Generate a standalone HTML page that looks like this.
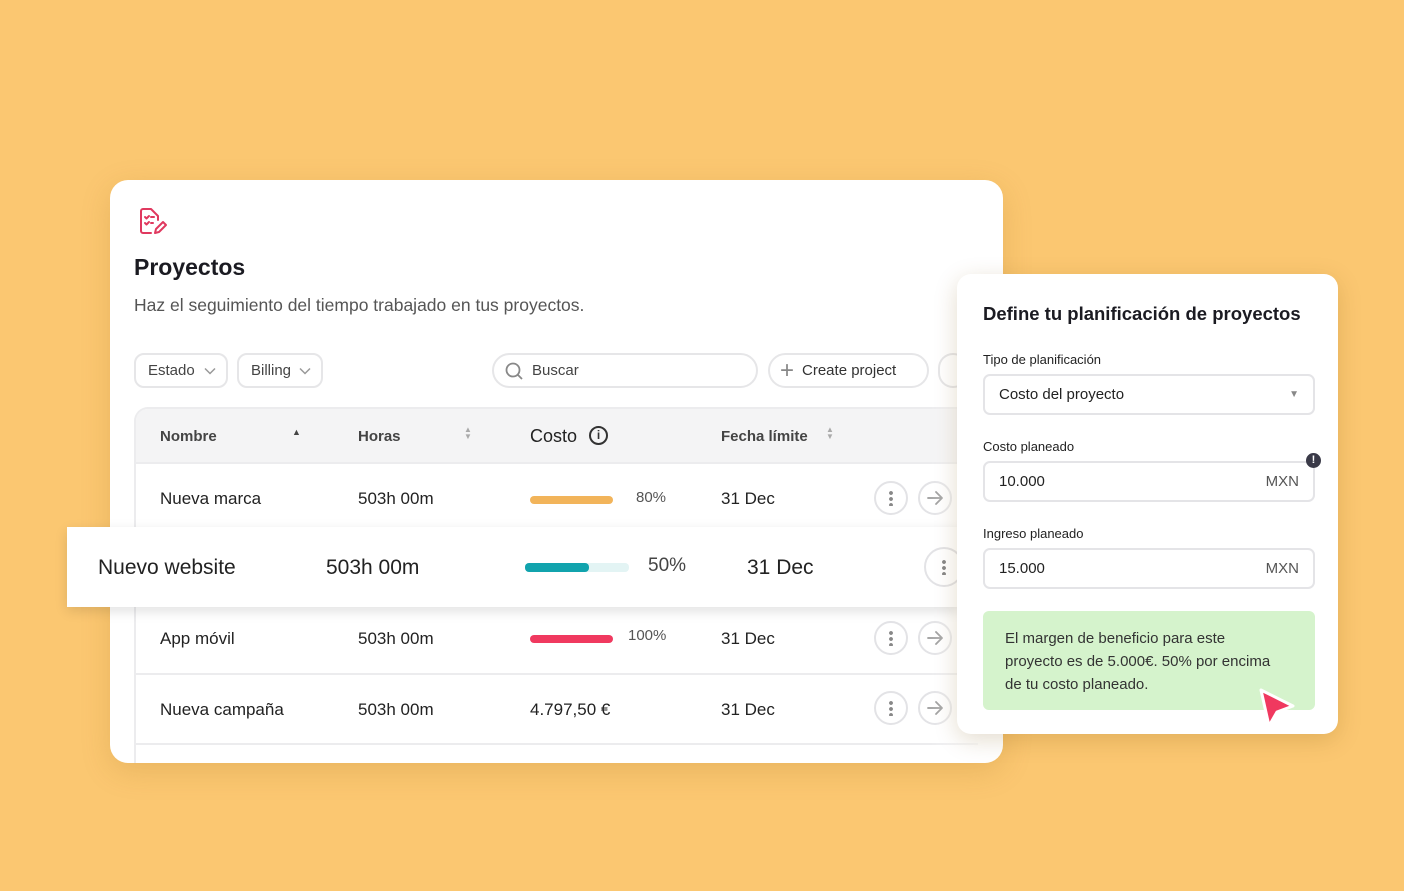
<!DOCTYPE html>
<html><head><meta charset="utf-8"><style>
*{box-sizing:border-box;margin:0;padding:0}
body{width:1404px;height:891px;background:#FBC771;font-family:"Liberation Sans",sans-serif;position:relative;overflow:hidden;color:#1f1f24}
.abs{position:absolute}
.card{left:110px;top:180px;width:893px;height:583px;background:#fff;border-radius:18px;box-shadow:0 8px 30px rgba(150,100,20,.18);overflow:hidden}
.btn{position:absolute;border:2px solid #e6e6e8;border-radius:10px;height:35px;top:353px;font-size:15px;color:#444;display:flex;align-items:center;padding-left:12px}
.table{left:134px;top:407px;width:844px;height:356px;border-left:2px solid #ececee;border-top:2px solid #ececee;border-top-left-radius:14px;overflow:hidden}
.hdr{position:absolute;left:0;top:0;width:100%;height:55px;background:#f4f4f5;border-bottom:2px solid #ececee}
.row{position:absolute;left:0;width:100%;border-bottom:2px solid #ececee;background:#fff}
.t{position:absolute;font-size:17px;color:#222}
.h{position:absolute;font-size:15px;font-weight:bold;color:#444;top:19px}
.circ{position:absolute;width:34px;height:34px;border:2px solid #e3e3e6;border-radius:50%;display:flex;align-items:center;justify-content:center;color:#888}
.dots{width:4px;height:16px;background:radial-gradient(circle,#888 1.8px,transparent 2px) 0 0/4px 6px repeat-y}
.bar{position:absolute;height:8px;border-radius:4px}
.panel{left:957px;top:274px;width:381px;height:460px;background:#fff;border-radius:14px;box-shadow:0 6px 24px rgba(120,80,10,.2)}
.lbl{position:absolute;left:26px;font-size:13px;color:#222}
.inp{position:absolute;left:26px;width:332px;height:41px;border:2px solid #e4e4e7;border-radius:7px;font-size:15px;color:#222;padding:0 14px;display:flex;align-items:center;justify-content:space-between}
</style></head><body>
<div class="abs card">
 <svg class="abs" style="left:28px;top:26px" width="30" height="30" viewBox="0 0 30 30" fill="none" stroke="#e0395f" stroke-width="2" stroke-linecap="round" stroke-linejoin="round"><path d="M13 27H5a2 2 0 0 1-2-2V5a2 2 0 0 1 2-2h8l7 7v4"/><path d="M7 11l1.5 1.5L11 10M13 11h3M7 17l1.5 1.5L11 16M13 17h2"/><path d="M17 27l1-4 7-7 3 3-7 7z"/></svg>
 <div class="abs" style="left:24px;top:74px;font-size:23px;font-weight:bold;color:#1b1b22">Proyectos</div>
 <div class="abs" style="left:24px;top:115px;font-size:17.5px;color:#555">Haz el seguimiento del tiempo trabajado en tus proyectos.</div>
</div>
<svg width="0" height="0" style="position:absolute"><defs><symbol id="chev" viewBox="0 0 12 8"><path d="M1 1.5l5 5 5-5" fill="none" stroke="#999" stroke-width="1.5"/></symbol><symbol id="arr" viewBox="0 0 20 20"><path d="M3 10h14M11 4l6 6-6 6" fill="none" stroke="#999" stroke-width="1.8" stroke-linecap="round" stroke-linejoin="round"/></symbol></defs></svg>
<div class="btn" style="left:134px;width:94px">Estado <svg style="margin-left:9px" width="12" height="8"><use href="#chev"/></svg></div>
<div class="btn" style="left:237px;width:86px">Billing <svg style="margin-left:8px" width="12" height="8"><use href="#chev"/></svg></div>
<div class="btn" style="left:492px;width:266px;border-radius:18px;padding-left:10px"><svg width="20" height="20" viewBox="0 0 20 20" fill="none" stroke="#888" stroke-width="1.8"><circle cx="9" cy="9" r="6.5"/><path d="M14 14l4 4"/></svg><span style="margin-left:8px">Buscar</span></div>
<div class="btn" style="left:768px;width:161px;border-radius:18px;padding-left:10px;color:#333"><span style="font-size:24px;color:#888;margin-right:8px;font-weight:300">+</span>Create project</div>
<div class="btn" style="left:938px;width:30px;border-radius:18px;border-right:none"></div>
<div class="abs table">
 <div class="hdr">
  <div class="h" style="left:24px">Nombre</div><div class="abs" style="left:156px;top:18px;font-size:9px;color:#444">▲</div>
  <div class="h" style="left:222px">Horas</div><div class="abs" style="left:328px;top:17px;font-size:8px;color:#aaa;line-height:7px">▲<br>▼</div>
  <div class="h" style="left:394px;font-weight:normal;font-size:18px;color:#222;top:17px">Costo</div>
  <div class="abs" style="left:453px;top:17px;width:19px;height:19px;border:2px solid #333;border-radius:50%;font-size:12px;font-weight:bold;text-align:center;line-height:15px;color:#333">i</div>
  <div class="h" style="left:585px">Fecha límite</div><div class="abs" style="left:690px;top:17px;font-size:8px;color:#aaa;line-height:7px">▲<br>▼</div>
 </div>
 <div class="row" style="top:55px;height:70px">
  <div class="t" style="left:24px;top:25px">Nueva marca</div><div class="t" style="left:222px;top:25px">503h 00m</div>
  <div class="bar" style="left:394px;top:32px;width:83px;background:#f2b45a"></div><div class="t" style="left:500px;top:25px;font-size:15px;color:#555">80%</div>
  <div class="t" style="left:585px;top:25px">31 Dec</div>
 </div>
 <div class="row" style="top:198px;height:68px">
  <div class="t" style="left:24px;top:22px">App móvil</div><div class="t" style="left:222px;top:22px">503h 00m</div>
  <div class="bar" style="left:394px;top:28px;width:83px;background:#f0395f"></div><div class="t" style="left:492px;top:20px;font-size:15px;color:#555">100%</div>
  <div class="t" style="left:585px;top:22px">31 Dec</div>
 </div>
 <div class="row" style="top:266px;height:70px">
  <div class="t" style="left:24px;top:25px">Nueva campaña</div><div class="t" style="left:222px;top:25px">503h 00m</div>
  <div class="t" style="left:394px;top:25px">4.797,50 €</div>
  <div class="t" style="left:585px;top:25px">31 Dec</div>
 </div>
</div>
<div class="circ" style="left:874px;top:481px"><div class="dots"></div></div><div class="circ" style="left:918px;top:481px"><svg width="20" height="20"><use href="#arr"/></svg></div>
<div class="circ" style="left:874px;top:621px"><div class="dots"></div></div><div class="circ" style="left:918px;top:621px"><svg width="20" height="20"><use href="#arr"/></svg></div>
<div class="circ" style="left:874px;top:691px"><div class="dots"></div></div><div class="circ" style="left:918px;top:691px"><svg width="20" height="20"><use href="#arr"/></svg></div>
<div class="abs" style="left:930px;top:400px;width:50px;height:363px;background:linear-gradient(90deg,rgba(255,255,255,0),rgba(255,255,255,.7))"></div>
<div class="abs" style="left:67px;top:527px;width:893px;height:80px;background:#fff;box-shadow:0 4px 12px rgba(0,0,0,.12)">
 <div class="t" style="left:31px;top:29px;font-size:21px">Nuevo website</div>
 <div class="t" style="left:259px;top:29px;font-size:21px">503h 00m</div>
 <div class="bar" style="left:458px;top:36px;width:104px;height:9px;background:#e3f4f4"></div>
 <div class="bar" style="left:458px;top:36px;width:64px;height:9px;background:#11a3ad"></div>
 <div class="t" style="left:581px;top:28px;font-size:19px;color:#444">50%</div>
 <div class="t" style="left:680px;top:29px;font-size:21px">31 Dec</div>
 <div class="circ" style="left:857px;top:20px;width:40px;height:40px"><div class="dots"></div></div>
</div>
<div class="abs panel">
 <div class="abs" style="left:26px;top:29px;font-size:18.5px;font-weight:bold;color:#1b1b22">Define tu planificación de proyectos</div>
 <div class="lbl" style="top:78px">Tipo de planificación</div>
 <div class="inp" style="top:100px;height:41px"><span>Costo del proyecto</span><span style="font-size:10px;color:#888">▼</span></div>
 <div class="lbl" style="top:165px">Costo planeado</div>
 <div class="inp" style="top:187px"><span>10.000</span><span style="color:#555">MXN</span></div>
 <div class="abs" style="left:349px;top:179px;width:15px;height:15px;border-radius:50%;background:#3a3a48;color:#fff;font-size:11px;font-weight:bold;text-align:center;line-height:15px">!</div>
 <div class="lbl" style="top:252px">Ingreso planeado</div>
 <div class="inp" style="top:274px"><span>15.000</span><span style="color:#555">MXN</span></div>
 <div class="abs" style="left:26px;top:337px;width:332px;height:99px;background:#d5f3cc;border-radius:6px;padding:16px 10px 0 22px;font-size:15px;line-height:23px;color:#333;white-space:nowrap">El margen de beneficio para este<br>proyecto es de 5.000€. 50% por encima<br>de tu costo planeado.</div>
 <svg class="abs" style="left:298px;top:410px" width="44" height="48" viewBox="0 0 44 48"><path d="M6 6 L38 22 L22 28 L14 42 Z" fill="#f0395f" stroke="#fff" stroke-width="3" stroke-linejoin="round"/></svg>
</div>
</body></html>
